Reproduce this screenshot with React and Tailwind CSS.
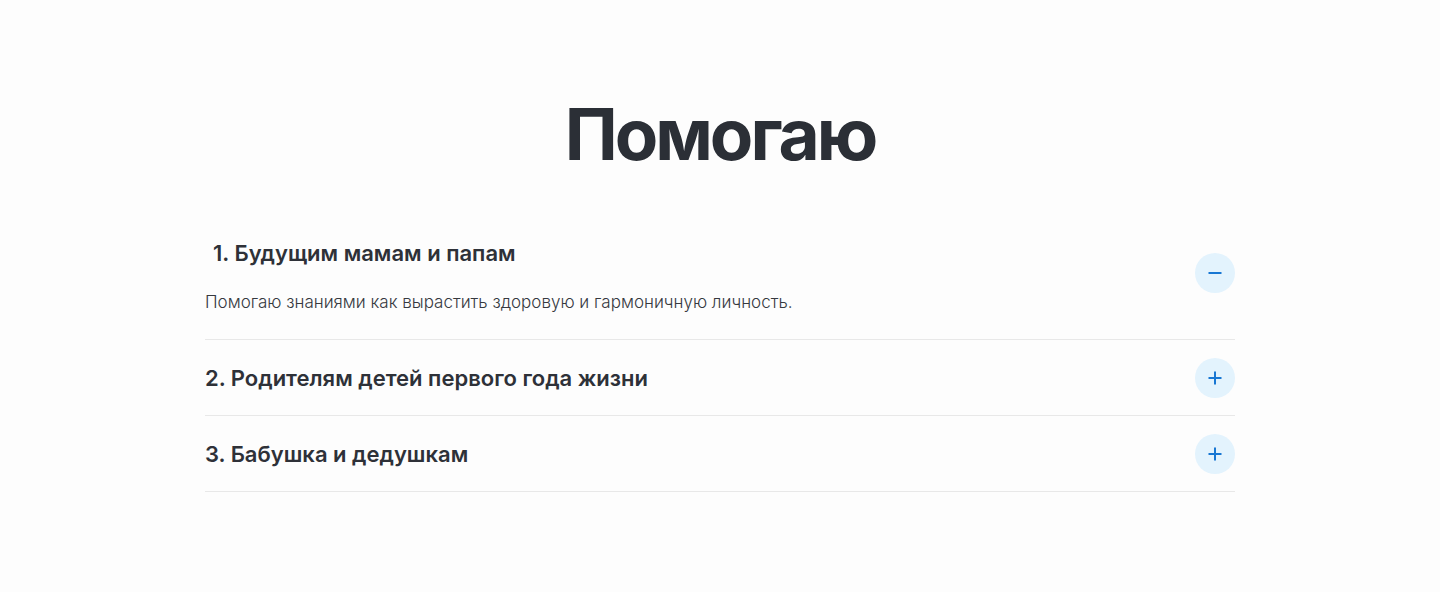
import React from "react";

const items = [
  { title: "1. Будущим мамам и папам", open: true, text: "Помогаю знаниями как вырастить здоровую и гармоничную личность." },
  { title: "2. Родителям детей первого года жизни", open: false },
  { title: "3. Бабушка и дедушкам", open: false },
];

function Icon({ open }) {
  return (
    <div className="flex h-10 w-10 shrink-0 items-center justify-center rounded-full bg-[#e3f3fd]">
      <svg width="16" height="16" viewBox="0 0 16 16" fill="none">
        <path d="M1.5 8h13" stroke="#1877d3" strokeWidth="2" />
        {!open && <path d="M8 1.5v13" stroke="#1877d3" strokeWidth="2" />}
      </svg>
    </div>
  );
}

export default function App() {
  return (
    <div className="min-h-[592px] w-full bg-[#fdfdfd] pt-[99px] text-[#2b2f36]" style={{ fontFamily: "Inter, 'Noto Sans', sans-serif" }}>
      <h2 className="text-center text-[71px] font-bold leading-none tracking-[-3px]">Помогаю</h2>
      <div className="mx-auto mt-[45px] w-[1030px]">
        {items.map((it, i) =>
          it.open ? (
            <div key={i} className="flex items-start justify-between border-b border-[#e8e8e8] pt-[24px] pb-[25px]">
              <div>
                <div className="pl-2 text-[22px] font-semibold leading-[28px] text-[#2e3138]">{it.title}</div>
                <p className="mt-[23px] text-[17px] font-light leading-[24px] text-[#36393f]">{it.text}</p>
              </div>
              <div className="mt-[14px]"><Icon open /></div>
            </div>
          ) : (
            <div key={i} className="flex items-center justify-between border-b border-[#e8e8e8] pt-[18px] pb-[17px]">
              <div className="text-[22px] font-semibold leading-[28px] text-[#2e3138]">{it.title}</div>
              <Icon open={false} />
            </div>
          )
        )}
      </div>
    </div>
  );
}
